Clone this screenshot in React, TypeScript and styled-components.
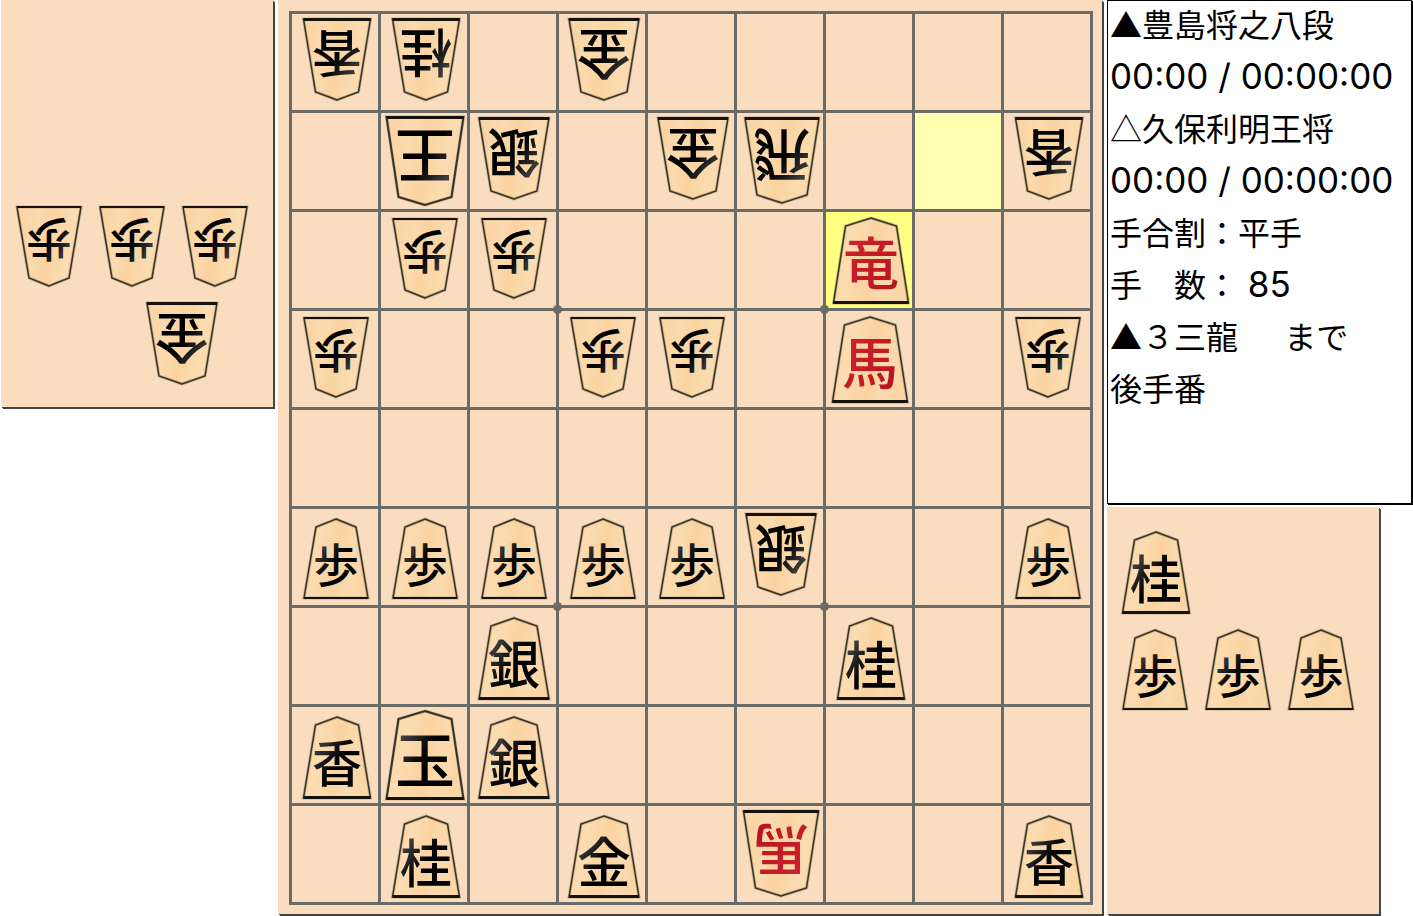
import React from "react";
import styled, { createGlobalStyle } from "styled-components";

const GlobalStyle = createGlobalStyle`
  * { box-sizing: border-box; }
  body { margin: 0; background: #fff; color: #000; }
`;

type Side = "sente" | "gote";
type Kind = "歩" | "香" | "桂" | "銀" | "金" | "飛" | "王" | "玉" | "竜" | "馬";

const WOOD = "#fadcbe";
const LINE = "#6b6b67";
const EDGE = "#444444";

const Page = styled.main`
  display: grid;
  grid-template-columns: 275fr 826fr 306fr;
  gap: 3px;
  align-items: start;
`;

const SideColumn = styled.div`
  display: flex;
  flex-direction: column;
  gap: 3px;
`;

const HandPanel = styled.section<{ $side: Side }>`
  display: flex;
  flex-direction: column;
  justify-content: ${(p) => (p.$side === "gote" ? "flex-end" : "flex-start")};
  gap: 8px;
  width: 100%;
  max-width: 272px;
  min-height: 407px;
  margin-left: ${(p) => (p.$side === "gote" ? "1px" : "0")};
  padding: 18px 0 16px 7px;
  background: ${WOOD};
  box-shadow: 1px 1px 0 ${EDGE}, 2px 2px 0 ${EDGE};
`;

const HandRow = styled.div<{ $end?: boolean }>`
  display: flex;
  gap: 3px;
  justify-content: ${(p) => (p.$end ? "flex-end" : "flex-start")};
  padding-right: ${(p) => (p.$end ? "53px" : "0")};
`;

const BoardPanel = styled.section`
  margin: 0 2px 2px 0;
  padding: 11px 9px 9px 11px;
  background: ${WOOD};
  box-shadow: 1px 1px 0 ${EDGE}, 2px 2px 0 ${EDGE};
`;

const BoardGrid = styled.div`
  display: grid;
  grid-template-columns: repeat(9, minmax(0, 1fr));
  grid-auto-rows: 96px;
  gap: 3px;
  border: 3px solid ${LINE};
  background: ${LINE};
`;

const Cell = styled.div<{ $fill: string; $star: boolean }>`
  position: relative;
  display: flex;
  align-items: center;
  justify-content: center;
  background: ${(p) => p.$fill};

  &::after {
    content: "";
    display: ${(p) => (p.$star ? "block" : "none")};
    position: absolute;
    z-index: 1;
    right: -6px;
    bottom: -6px;
    width: 9px;
    height: 9px;
    border-radius: 50%;
    background: ${LINE};
  }
`;

const PieceSvg = styled.svg`
  display: block;
  flex: none;
  width: 80px;
  height: 90px;
  overflow: visible;
`;

const PieceText = styled.text`
  font-family: "Noto Sans CJK JP", sans-serif;
  font-weight: 500;
  text-anchor: middle;
`;

const InfoPanel = styled.section`
  min-height: 504px;
  margin-right: 1px;
  padding-left: 2px;
  border: 1px solid #000;
  box-shadow: 1px 1px 0 #000;
  background: #fff;
`;

const InfoLine = styled.p`
  margin: 0;
  height: 52px;
  font-family: "Noto Sans CJK JP", sans-serif;
  font-size: 32px;
  font-weight: 400;
  line-height: 44px;
  white-space: pre;
`;

const Digits = styled.span`
  font-family: Inter, sans-serif;
  font-size: 35px;
  line-height: 44px;
`;

interface Shape {
  center: number;
  width: number;
  top: number;
  bottom: number;
  bar: number;
  size: number;
  middle: number;
}

const SHAPES: Record<Kind, Shape> = {
  歩: { center: 41, width: 64, top: 7, bottom: 86, bar: 2, size: 46, middle: 53 },
  香: { center: 42, width: 67, top: 7, bottom: 88, bar: 3, size: 50, middle: 53 },
  桂: { center: 42, width: 67, top: 7, bottom: 88, bar: 3, size: 52, middle: 54 },
  銀: { center: 41, width: 70, top: 7, bottom: 88, bar: 3, size: 52, middle: 53 },
  金: { center: 42, width: 70, top: 7, bottom: 88, bar: 3, size: 54, middle: 53 },
  飛: { center: 42, width: 74, top: 3, bottom: 88, bar: 3, size: 57, middle: 50 },
  王: { center: 41, width: 77, top: 1, bottom: 89, bar: 3, size: 60, middle: 50 },
  玉: { center: 41, width: 77, top: 1, bottom: 89, bar: 3, size: 60, middle: 50 },
  竜: { center: 42, width: 75, top: 3, bottom: 88, bar: 3, size: 56, middle: 48 },
  馬: { center: 41, width: 75, top: 3, bottom: 88, bar: 3, size: 56, middle: 49 },
};

const Definitions = styled.svg`
  position: absolute;
`;

function PieceDefs() {
  return (
    <Definitions width="0" height="0" aria-hidden="true">
      <defs>
        <linearGradient id="wood" x1="0" y1="0" x2="1" y2="0.2">
          <stop offset="0" stopColor="#fbd8a8" />
          <stop offset="0.3" stopColor="#fbdcb0" />
          <stop offset="0.6" stopColor="#fad3a0" />
          <stop offset="0.8" stopColor="#fbdaae" />
          <stop offset="1" stopColor="#fad6a6" />
        </linearGradient>
        <linearGradient id="ink" x1="0" y1="0" x2="1" y2="1">
          <stop offset="0.15" stopColor="#4a4a4a" />
          <stop offset="0.5" stopColor="#000" />
        </linearGradient>
        <linearGradient id="red" x1="0" y1="0" x2="1" y2="1">
          <stop offset="0" stopColor="#d02832" />
          <stop offset="1" stopColor="#b80f1c" />
        </linearGradient>
      </defs>
    </Definitions>
  );
}

function Piece({ kind, side }: { kind: Kind; side: Side }) {
  const s = SHAPES[kind];
  const left = s.center - s.width / 2;
  const right = s.center + s.width / 2;
  const shoulder = s.top + 8;
  const promoted = kind === "竜" || kind === "馬";
  const points = `${s.center},${s.top} ${right - 12},${shoulder} ${right},${s.bottom} ${left},${s.bottom} ${left + 12},${shoulder}`;
  return (
    <PieceSvg viewBox="0 0 80 90">
      <g transform={side === "gote" ? `rotate(180 ${s.center} 45)` : undefined}>
        <polygon points={points} fill="url(#wood)" stroke="#9b8562" strokeOpacity="0.5" strokeWidth="3" />
        <polygon points={points} fill="none" stroke="#38342a" strokeWidth={s.width > 76 ? 2 : 1.5} />
        <rect x={left} y={s.bottom - s.bar + 1} width={s.width} height={s.bar} fill="#14120c" />
        <PieceText x={s.center} y={s.middle + Math.round(s.size * 0.38)} fontSize={s.size} fill={promoted ? "url(#red)" : "url(#ink)"}>
          {kind}
        </PieceText>
      </g>
    </PieceSvg>
  );
}

/* One list per rank; "v" marks a piece of the upper player. */
const RANKS: string[][] = [
  ["v香", "v桂", "", "v金", "", "", "", "", ""],
  ["", "v王", "v銀", "", "v金", "v飛", "", "", "v香"],
  ["", "v歩", "v歩", "", "", "", "竜", "", ""],
  ["v歩", "", "", "v歩", "v歩", "", "馬", "", "v歩"],
  ["", "", "", "", "", "", "", "", ""],
  ["歩", "歩", "歩", "歩", "歩", "v銀", "", "", "歩"],
  ["", "", "銀", "", "", "", "桂", "", ""],
  ["香", "玉", "銀", "", "", "", "", "", ""],
  ["", "桂", "", "金", "", "v馬", "", "", "香"],
];

const isStar = (r: number, c: number) => (r === 2 || r === 5) && (c === 2 || c === 5);

const fillOf = (r: number, c: number) => {
  if (r === 1 && c === 7) return "#ffffb0";
  if (r === 2 && c === 6) return "#ffff80";
  return WOOD;
};

function Board() {
  return (
    <BoardPanel aria-label="将棋盤">
      <BoardGrid>
        {RANKS.map((rank, r) =>
          rank.map((code, c) => (
            <Cell key={`${r}-${c}`} $fill={fillOf(r, c)} $star={isStar(r, c)}>
              {code && <Piece kind={code.replace("v", "") as Kind} side={code.startsWith("v") ? "gote" : "sente"} />}
            </Cell>
          ))
        )}
      </BoardGrid>
    </BoardPanel>
  );
}

export default function App() {
  return (
    <>
      <GlobalStyle />
      <PieceDefs />
      <Page>
        <HandPanel $side="gote">
          <HandRow>
            <Piece kind="歩" side="gote" />
            <Piece kind="歩" side="gote" />
            <Piece kind="歩" side="gote" />
          </HandRow>
          <HandRow $end>
            <Piece kind="金" side="gote" />
          </HandRow>
        </HandPanel>
        <Board />
        <SideColumn>
          <InfoPanel>
            <InfoLine>▲豊島将之八段</InfoLine>
            <InfoLine><Digits>00:00 / 00:00:00</Digits></InfoLine>
            <InfoLine>△久保利明王将</InfoLine>
            <InfoLine><Digits>00:00 / 00:00:00</Digits></InfoLine>
            <InfoLine>手合割：平手</InfoLine>
            <InfoLine>手　数：<Digits> 85</Digits></InfoLine>
            <InfoLine>▲３三龍　{"  "}まで</InfoLine>
            <InfoLine>後手番</InfoLine>
          </InfoPanel>
          <HandPanel $side="sente">
            <HandRow>
              <Piece kind="桂" side="sente" />
            </HandRow>
            <HandRow>
              <Piece kind="歩" side="sente" />
              <Piece kind="歩" side="sente" />
              <Piece kind="歩" side="sente" />
            </HandRow>
          </HandPanel>
        </SideColumn>
      </Page>
    </>
  );
}
